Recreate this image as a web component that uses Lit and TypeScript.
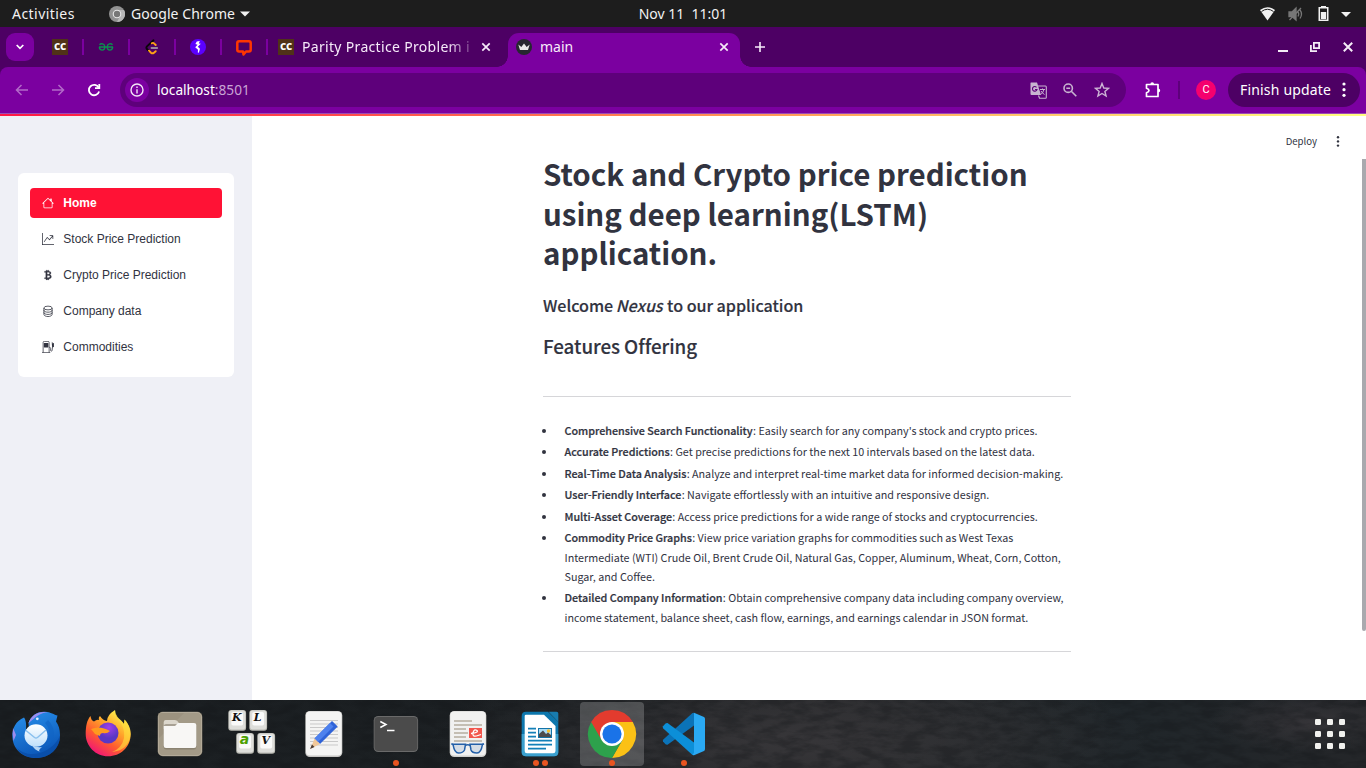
import { LitElement, html, css, svg } from "lit";
import { customElement } from "lit/decorators.js";
import { classMap } from "lit/directives/class-map.js";

const ccIcon = html`<span class="cc">cc</span>`;
const closeIcon = html`<svg width="10" height="10" viewBox="0 0 10 10" stroke="#f6eaf9" stroke-width="1.7" fill="none"><path d="M1.3 1.3 8.7 8.7M8.7 1.3 1.3 8.7" /></svg>`;

const pinned = [
  ccIcon,
  html`<svg width="16" height="16" viewBox="0 0 16 16" fill="none" stroke="#0b8f4e" stroke-width="1.4"><path d="M1.500 5.700C3 4 6.600 4.300 6.900 8M1 8H15M6.900 8C6.700 12 1.700 12.300 1.300 8M14.500 5.700C13 4 9.400 4.300 9.100 8M9.100 8C9.300 12 14.300 12.300 14.700 8"/></svg>`,
  html`<svg width="16" height="16" viewBox="0 0 16 16" fill="none" stroke-width="1.9" stroke-linecap="round"><path d="M9.500 1.300 3 7.400Q1.800 8.700 3 10L5 12" stroke="#0a0508"/><path d="M5 11.700 7 13.700Q8.500 15 10 13.700L11.700 12.200M7.800 4.200Q9.200 3.400 10.300 4.600L11.700 6" stroke="#ffa116"/><path d="M7.300 9H13.300" stroke="#b3b3b3" stroke-width="1.500"/></svg>`,
  html`<svg width="16" height="16" viewBox="0 0 16 16"><circle cx="8" cy="8" r="8" fill="#5b00ff"/><path d="M6.800 2.500 9.800 2 8.800 4.500 10.800 4.700 7.800 7.800 10 9.800 8.800 13.800 7.800 13.500 8 10.800 5.200 8.200 7.600 5.800 5.400 5Z" fill="#fff"/></svg>`,
  html`<svg width="18" height="18" viewBox="0 0 18 18" fill="none" stroke="#ff3600" stroke-width="2.500" stroke-linejoin="round"><path d="M4 2.300H14Q15.700 2.300 15.700 4V10.800Q15.700 12.500 14 12.500H11L8.500 15.500 8 12.500H4Q2.300 12.500 2.300 10.800V4Q2.300 2.300 4 2.300Z"/></svg>`,
];

const navItems = [
  {
    label: "Home",
    icon: svg`<path fill="currentColor" d="M2 13.500V7h1v6.500a.5.5 0 0 0 .5.5h9a.5.5 0 0 0 .5-.5V7h1v6.500a1.500 1.500 0 0 1-1.500 1.500h-9A1.500 1.500 0 0 1 2 13.500zM13 2.500V6l-2-2V2.500a.5.5 0 0 1 .5-.5h1a.5.5 0 0 1 .5.5zM7.293 1.500a1 1 0 0 1 1.414 0l6.647 6.646a.5.5 0 0 1-.708.708L8 2.207 1.354 8.854a.5.5 0 1 1-.708-.708L7.293 1.500z"/>`,
  },
  {
    label: "Stock Price Prediction",
    icon: svg`<path fill="currentColor" d="M0 0h1v15h15v1H0V0Zm10 3.500a.5.5 0 0 1 .5-.5h4a.5.5 0 0 1 .5.5v4a.5.5 0 0 1-1 0V4.900l-3.613 4.417a.5.5 0 0 1-.74.037L7.060 6.767l-3.656 5.027a.5.5 0 0 1-.808-.588l4-5.500a.5.5 0 0 1 .758-.06l2.609 2.610L13.445 4H10.500a.5.5 0 0 1-.5-.5Z"/>`,
  },
  {
    label: "Crypto Price Prediction",
    icon: svg`<path fill="currentColor" stroke="currentColor" stroke-width=".3" d="M5.500 13v1.250c0 .138.112.25.25.25h1a.25.25 0 0 0 .25-.25V13h.5v1.250c0 .138.112.25.25.25h1a.25.25 0 0 0 .25-.25V13h.084c1.992 0 3.416-1.033 3.416-2.820 0-1.502-1.007-2.323-2.186-2.440v-.088c.97-.242 1.683-.974 1.683-2.190C11.997 3.930 10.847 3 9.092 3H9V1.750a.25.25 0 0 0-.25-.25h-1a.25.25 0 0 0-.25.25V3h-.573V1.750a.25.25 0 0 0-.25-.25H5.750a.25.25 0 0 0-.25.25V3l-1.998.011a.25.25 0 0 0-.25.25v.989c0 .137.11.25.248.25l.755-.005a.75.75 0 0 1 .745.75v5.505a.75.75 0 0 1-.75.75l-.748.011a.25.25 0 0 0-.25.25v1c0 .138.112.25.25.25L5.500 13zm1.427-8.513h1.719c.906 0 1.438.498 1.438 1.312 0 .871-.575 1.362-1.877 1.362h-1.280V4.487zm0 4.051h1.840c1.137 0 1.756.58 1.756 1.524 0 .953-.626 1.450-2.158 1.450H6.927V8.539z"/>`,
  },
  {
    label: "Company data",
    icon: svg`<g fill="none" stroke="currentColor" stroke-width="1.050"><ellipse cx="8" cy="4" rx="5.500" ry="2.500"/><path d="M2.500 4v8.500C2.500 14 5 15.400 8 15.400s5.500-1.400 5.500-2.900V4M2.500 7C2.500 8.500 5 9.600 8 9.600S13.500 8.500 13.500 7M2.500 10C2.500 11.500 5 12.600 8 12.600S13.500 11.500 13.500 10"/></g>`,
  },
  {
    label: "Commodities",
    icon: svg`<path fill="currentColor" d="M3 2.500h5a.5.5 0 0 1 .5.5v5a.5.5 0 0 1-.5.5H3a.5.5 0 0 1-.5-.5V3a.5.5 0 0 1 .5-.5z"/><path fill="none" stroke="currentColor" d="M1.500 15.500V2A1.500 1.500 0 0 1 3 .5H8A1.500 1.500 0 0 1 9.500 2V15.500M0 15.500H11M9.500 8.500H10Q11.500 8.500 11.500 10V12.500Q11.500 13.500 12.500 13.500T13.500 12.500L14 8 15.500 7.500V3.500L13 2"/><path fill="currentColor" d="M13 3h2.700v5H13.500z"/>`,
  },
];

const features = [
  ["Comprehensive Search Functionality", ["Easily search for any company's stock and crypto prices."]],
  ["Accurate Predictions", ["Get precise predictions for the next 10 intervals based on the latest data."]],
  ["Real-Time Data Analysis", ["Analyze and interpret real-time market data for informed decision-making."]],
  ["User-Friendly Interface", ["Navigate effortlessly with an intuitive and responsive design."]],
  ["Multi-Asset Coverage", ["Access price predictions for a wide range of stocks and cryptocurrencies."]],
  ["Commodity Price Graphs", ["View price variation graphs for commodities such as West Texas", "Intermediate (WTI) Crude Oil, Brent Crude Oil, Natural Gas, Copper, Aluminum, Wheat, Corn, Cotton,", "Sugar, and Coffee."]],
  ["Detailed Company Information", ["Obtain comprehensive company data including company overview,", "income statement, balance sheet, cash flow, earnings, and earnings calendar in JSON format."]],
] as [string, string[]][];

const keycap = (x: number, y: number, letter: string, kind: string) => svg`
  <rect x=${x} y=${y} width="17.800" height="20.800" rx="3" fill="#b9b9b2"/>
  <rect x=${x + 0.8} y=${y + 0.6} width="16.200" height="18.800" rx="2.600" fill="#dededa"/>
  <rect x=${x + 3} y=${y + 2} width="11.800" height="13.500" rx="1.800" fill="#fafaf9"/>
  <text x=${x + 8.4} y=${y + 11} text-anchor="middle" class=${kind}>${letter}</text>`;

const apps = [
  {
    name: "Thunderbird", dots: 0,
    art: svg`<defs>
      <linearGradient id="tb" x1="0" y1="0" x2="0.400" y2="1"><stop offset="0" stop-color="#2a93ef"/><stop offset="1" stop-color="#0b57b8"/></linearGradient>
      <linearGradient id="tbe" x1="0" y1="0" x2="0" y2="1"><stop offset="0" stop-color="#fff"/><stop offset="1" stop-color="#bfe0fb"/></linearGradient></defs>
      <path d="M20 15.500C12 19 8 26 8.300 35C9.500 49 20 56 32 56C46 56 56 46 56 33C56 27 54.500 23 52 19.500L53.500 13.500C50 13 47 10 41 9.800C33 9.300 27 14 24.500 21L24.800 24.500L22 28C22.500 23 22 18 20 15.500Z" fill="url(#tb)"/>
      <path d="M9 26Q8 32 9.500 39L12 33Q10 28 9 26ZM24.300 21.500C27 13 34 8.800 44 10.300C36 10.500 32 15 24.300 21.500Z" fill="#9d8df0"/>
      <path d="M12 45C22 57 46 54 56 34C56 47 45 56 32 56Q18 56 12 45Z" fill="#0a4ca5" opacity=".75"/>
      <path d="M41 21Q47 27 45 37Q42 44 35 46Q48 45 50 33Q50 24 44 18Z" fill="#1164c4" opacity=".6"/>
      <circle cx="33.300" cy="16.800" r="1.400" fill="#dff0ff"/>
      <ellipse cx="32" cy="33.500" rx="11.500" ry="11.300" fill="url(#tbe)"/><path d="M28 43Q33 46 38 45Q33 49 36.500 50Q30 48 28 43Z" fill="#b5d6f5"/>
      <path d="M22 28.500 30.500 35.500Q32 36.500 33.500 35.500L42 28" stroke="#8ac0ee" stroke-width="1.500" fill="none"/>`,
  },
  {
    name: "Firefox", dots: 0,
    art: svg`<defs>
      <linearGradient id="ff" x1="0.850" y1="0.100" x2="0.250" y2="1"><stop offset="0" stop-color="#fff44f"/><stop offset=".35" stop-color="#ffa52a"/><stop offset=".65" stop-color="#ff5a30"/><stop offset="1" stop-color="#f0107c"/></linearGradient>
      <radialGradient id="fp" cx=".55" cy=".25"><stop offset="0" stop-color="#a13fe8"/><stop offset="1" stop-color="#5a37c4"/></radialGradient></defs>
      <path d="M14.500 14C15 17 16 19 18 19.500Q21 17 23 18C22.500 15.500 23 15 24 14C26 17 28 18.500 31 19Q31 13 39 8C39 16 45 17 48 22L48.500 17.500C54 23 54.700 29 54.700 32C54.700 45 44.500 54.300 32 54.300S9.700 44 9.700 32C9.700 24 11 18 14.500 14Z" fill="url(#ff)"/>
      <circle cx="32" cy="31" r="10.500" fill="url(#fp)"/>
      <path d="M15 27Q24 23 34 29Q31 32 27 31Q24 31 24 34L19 32Q17 29 15 27Z" fill="#ff9a1f"/>
      <path d="M39 8C38 18 50 20 48 36Q46 46 36 50Q53 48 54.600 32Q54 24 48.500 17.500L48 22C45 17 40 16 39 8Z" fill="#ffe13d" opacity=".6"/>`,
  },
  {
    name: "Files", dots: 0,
    art: svg`<rect x="9.700" y="9.700" width="44.600" height="44.600" rx="5" fill="#8c826f"/><rect x="10.500" y="10.500" width="43" height="43" rx="4.500" fill="#a39a87" stroke="#b3aa99"/>
      <path d="M10.500 11H36L11 36Z" fill="#978d79" opacity=".6"/>
      <path d="M17.500 18H27Q29.500 18 30.500 20.500L31 23L30 27H15.700V20Q16 18 17.500 18Z" fill="#dcd7cc"/>
      <rect x="15.700" y="22" width="32.500" height="25.500" rx="2.500" fill="#746b5b" opacity=".5"/><path d="M15.700 24H27L30 21H46Q48.300 21 48.300 23V43.500Q48.300 46 46 46H18Q15.700 46 15.700 43.500Z" fill="#f8f7f5"/>`,
  },
  {
    name: "Klavaro", dots: 0,
    art: svg`${keycap(8.3, 8, "K", "key")}${keycap(29.3, 8, "L", "key")}${keycap(16.2, 31, "a", "key green")}${keycap(37.3, 31, "V", "key")}`,
  },
  {
    name: "Text Editor", dots: 0,
    art: svg`<rect x="13.300" y="9" width="37" height="46" rx="4.500" fill="#c7c6c4"/><rect x="14" y="9.600" width="35.600" height="44" rx="4" fill="#f4f4f3"/>
      <path d="M18 18.500H46M18 22H46M18 25.500H46M18 29H46M18 32.500H46M18 36H46M18 39.500H46M18 43H46" stroke="#c9c9c9"/>
      <path d="M40 19 45.700 24.500 28 42 22.500 36.500Z" fill="#2f63d8"/><path d="M38 21 41.500 24.500 25 41 22.500 36.500Z" fill="#4d81ee"/>
      <path d="M22.500 36.500 28 42 18.500 46.700Z" fill="#f1c899"/><path d="M20 42.500 22.500 45 18 47Z" fill="#4b3a31"/>`,
  },
  {
    name: "Terminal", dots: 1,
    art: svg`<rect x="9.700" y="14" width="44.400" height="36" rx="4.500" fill="#6a6a6a"/><rect x="10.500" y="15" width="42.800" height="34" rx="4" fill="#4b4b4b"/>
      <path d="M16.300 19.500 22 22.500 16.300 25.500M23 28.500H30.500" fill="none" stroke="#fff" stroke-width="1.500"/>`,
  },
  {
    name: "Document Viewer", dots: 0,
    art: svg`<rect x="13.700" y="9" width="36.600" height="46" rx="4.500" fill="#cfcfcd"/><rect x="14.300" y="9.600" width="35.400" height="44" rx="4" fill="#f1f1f0"/>
      <path d="M18 19H36M18 23H46M18 27H30M18 31H32M18 35H30M18 39H46" stroke="#b5ad9f" stroke-width="1.700"/>
      <rect x="33" y="26" width="13" height="10" fill="#f2564d"/><path d="M35 31.500Q43 30.500 41 28.500Q38 26.500 37 31T42 33.500L45 32.500" fill="none" stroke="#fff" stroke-width="1.300"/>
      <g fill="#d5dde6" stroke="#2460a9" stroke-width="1.500"><path d="M17 42.300H29.500L28.500 48Q27 51 22.500 51Q18.500 51 17 42.300ZM34 42.300H46.500Q45 51 41 51Q36 51 35 48Z"/><path d="M29 43.500Q31.700 41.800 34.500 43.500M17 42.500 15.300 41.800M46.500 42.500 48 41.800" fill="none"/></g>`,
  },
  {
    name: "LibreOffice Writer", dots: 2,
    art: svg`<path d="M18 9.700H40L50.300 20V50Q50.300 54.300 46 54.300H18Q13.700 54.300 13.700 50V14Q13.700 9.700 18 9.700Z" fill="#0d77ad"/><path d="M13.700 32H50.300V50Q50.300 54.300 46 54.300H18Q13.700 54.300 13.700 50Z" fill="#3ba0ce"/>
      <path d="M18 12.700H36L47.500 24V49Q47.500 51.300 45 51.300H19Q16.700 51.300 16.700 49V14Q16.700 12.700 18 12.700Z" fill="#fff"/>
      <path d="M40.500 9.700H48.500Q50.300 9.700 50.300 11.500V20Z" fill="#187caf"/>
      <path d="M20 26.700H28M20 30.700H28M20 34.700H28M20 38.700H44M20 42.700H44M20 46.700H38" stroke="#1380b8" stroke-width="1.800"/>
      <rect x="30" y="26" width="14" height="10" fill="#1473a6"/><rect x="31" y="27" width="12" height="8" fill="#a9dcf7"/><circle cx="40.500" cy="29" r="1.700" fill="#f8bf28"/><path d="M31 35V32L35 28.500 38 32 40 30.500 43 33V35Z" fill="#4c4c4c"/>`,
  },
  {
    name: "Google Chrome", dots: 1,
    art: svg`<path d="M32 32 11.200 20A24 24 0 0 1 52.800 20Z" fill="#e33b2e"/><path d="M32 32 32 56A24 24 0 0 1 11.200 20Z" fill="#2da14c"/>
      <path d="M32 20H52.800A24 24 0 0 1 32 56L42.400 38Z" fill="#fbc116"/><path d="M11.200 20 21.600 38 32 32V20Z" fill="#e33b2e"/><path d="M21.600 38 32 44 42.400 38 32 56Q27 55 25 51Z" fill="#2da14c"/>
      <circle cx="32" cy="32" r="12" fill="#fff"/><circle cx="32" cy="32" r="9.600" fill="#1a73e8"/>`,
  },
  {
    name: "Visual Studio Code", dots: 1,
    art: svg`<path d="M42 10.700V23.500L15.500 42.700Q14.500 43 13.500 42.300L11 39.500Q10.500 38.300 11.300 37.400L40.500 11Z" fill="#0b73b8"/>
      <path d="M42 53.300V40.500L15.500 21Q14.500 20.800 13.500 21.500L11 24.200Q10.500 25.500 11.300 26.500L40.500 53Z" fill="#0c8fd8"/>
      <path d="M42 10.700 52 15Q53 15.500 53 17V47Q53 48.500 52 49L42 53.300Q41 53.300 40.500 52.500L42 51Z" fill="#2aa9f3"/>`,
  },
];

@customElement("app-root")
export class AppRoot extends LitElement {
  static styles = css`
    :host { display: flex; flex-direction: column; width: 1366px; height: 768px; overflow: hidden; font-family: "Noto Sans", "Open Sans", sans-serif; }
    * { box-sizing: border-box; }
    svg { display: block; flex: none; }
    .system { height: 27px; flex: none; background: #1d1d1d; color: #f2f2f2; display: grid; grid-template-columns: 1fr auto 1fr; align-items: center; font-size: 14px; line-height: 27px; padding: 0 13px 0 12px; }
    .sysleft { display: flex; align-items: center; }
    .activities { width: 97px; letter-spacing: 0.450px; }
    .appname { margin: 0 5px 0 6px; letter-spacing: 0.050px; }
    .clock { white-space: pre; margin-left: 1px; }
    .sysright { display: flex; justify-content: flex-end; align-items: center; }
    .tabs { height: 40px; flex: none; background: #4d0064; display: flex; padding-left: 6px; align-items: center; color: #f6eaf9; font-size: 14px; }
    .search { width: 28px; height: 28px; border-radius: 9px; background: #7b00a0; display: grid; place-items: center; margin-right: 4px; }
    .pin { width: 46px; height: 16px; border-right: 2px solid #7b00a0; display: grid; place-items: center; }
    .cc { display: block; width: 16px; height: 16px; background: #503218; color: #fff; font: bold 12px/14px "Noto Sans", sans-serif; text-align: center; letter-spacing: -0.200px; }
    .tab { display: flex; align-items: center; height: 34px; align-self: flex-end; }
    .idle { width: 240px; padding: 0 17px 6px 10px; }
    .title { flex: 1; white-space: nowrap; margin-left: 8px; line-height: 20px; }
    .idle .title { flex: none; width: 169px; margin-right: 10px; letter-spacing: 0.320px; -webkit-mask-image: linear-gradient(90deg, #000 86%, rgba(0, 0, 0, 0.250) 100%); mask-image: linear-gradient(90deg, #000 86%, rgba(0, 0, 0, 0.250) 100%); }
    .active { position: relative; width: 232px; background: #7b00a0; border-radius: 11px 11px 0 0; padding: 0 11px 6px 8px; }
    .active::before, .active::after { content: ""; position: absolute; bottom: 0; width: 11px; height: 11px; }
    .active::before { left: -11px; background: radial-gradient(circle at 0 0, transparent 10.500px, #7b00a0 11px); }
    .active::after { right: -11px; background: radial-gradient(circle at 100% 0, transparent 10.500px, #7b00a0 11px); }
    .plus { margin-left: 15px; }
    .wincontrols { margin-left: auto; display: flex; gap: 22px; padding-right: 13px; align-items: center; }
    .wincontrols svg:last-child { margin-left: 1px; }
    .toolbarwrap { background: #4d0064; flex: none; }
    .toolbar { height: 46px; background: #7b00a0; border-radius: 8px 8px 0 0; display: flex; align-items: center; padding: 0 6px 0 4px; }
    .btn { width: 36px; display: grid; place-items: center; }
    .omni { margin-left: 8px; width: 1006px; height: 34px; border-radius: 17px; background: #5e007b; display: flex; align-items: center; padding: 0 8px 0 5px; }
    .info { width: 24px; height: 24px; border-radius: 12px; background: #7b00a0; display: grid; place-items: center; }
    .url { flex: 1; margin-left: 8px; padding-bottom: 2px; color: #fff; font-size: 13.700px; }
    .url span { color: #c9a4d5; }
    .oicon { width: 32px; display: grid; place-items: center; }
    .ext { width: 54px; height: 18px; padding-left: 2px; border-right: 2px solid #5e007b; display: grid; place-items: center; }
    .avatar { width: 20px; height: 20px; margin: 0 12px 0 16px; border-radius: 10px; background: #f5006e; color: #fff; font: 11px/20px Roboto, sans-serif; text-align: center; }
    .update { width: 132px; height: 34px; border-radius: 17px; background: #4d0064; color: #fff; display: flex; align-items: center; justify-content: space-between; padding: 0 14px 2px 12px; font-size: 14px; letter-spacing: 0.180px; }
    .edge { flex: none; height: 1px; background: #9b4ab8; }
    .decor { flex: none; height: 2px; background: linear-gradient(90deg, #ff1744, #ff4b4b 25%, #ff8a50 50%, #fffd80 98%); }
    .page { flex: 1; min-height: 0; background: #fff; display: flex; color: #31333f; }
    .sidebar { width: 252px; background: #eff0f6; padding: 57px 18px 0; }
    .menu { background: #fff; border-radius: 6px; height: 204px; padding: 15px 12px; display: flex; flex-direction: column; gap: 6px; }
    .nav { height: 30px; border-radius: 4px; display: flex; align-items: center; padding-left: 12px; gap: 9.300px; font: 12px/18px "Liberation Sans", Arial, sans-serif; color: #31333f; }
    .nav.on { background: #ff1235; color: #fff; font-weight: bold; }
    .main { flex: 1; display: flex; font-family: "Noto Sans CJK SC", "Open Sans", sans-serif; }
    .doc { width: 528px; margin-left: 291px; padding-top: 38px; }
    h1 { margin: 0; font-size: 29.500px; line-height: 39.600px; font-weight: 700; white-space: nowrap; }
    .welcome { font-size: 16.100px; line-height: 22px; margin-top: 21px; font-weight: 500; letter-spacing: -0.030px; white-space: nowrap; -webkit-text-stroke: 0.150px #31333f; }
    .welcome em { margin: 0 1px 0 -1px; }
    .offer { font-size: 18.800px; line-height: 26px; margin-top: 17px; font-weight: 500; letter-spacing: -0.050px; -webkit-text-stroke: 0.150px #31333f; }
    .rule { height: 1px; background: #d6d6d9; }
    .first { margin-top: 37px; }
    ul { list-style: none; margin: 24px 0 22px; padding: 0; font-size: 10.750px; line-height: 19.300px; }
    li { display: flex; padding-bottom: 2.200px; }
    li::before { content: ""; width: 4px; height: 4px; border-radius: 2px; background: #31333f; margin: 8px 18.500px 0 -1px; flex: none; }
    .line { white-space: nowrap; }
    b { font-weight: 500; letter-spacing: -0.005px; margin-right: 0.300px; -webkit-text-stroke: 0.220px #31333f; }
    .actions { margin-left: auto; padding: 15px 9.500px 0 0; display: flex; align-items: center; height: 34px; font-size: 9.600px; gap: 17.500px; }
    .track { width: 4px; padding-top: 43px; }
    .thumb { height: 472px; background: #a9a9ae; border-radius: 0 0 2px 2px; }
    .dock { height: 68px; flex: none; display: flex; gap: 8px; padding: 2px 18px 0 4px; background: radial-gradient(ellipse 100px 30px at 1310px 22px, #353438, transparent), radial-gradient(ellipse 360px 80px at 790px 40px, #373639, transparent), linear-gradient(90deg, #1b1f22, #1c2023 45%, #28292b 60%, #20262a 82%, #242629); position: relative; }
    .grain { position: absolute; inset: 0; opacity: 0.300; }
    .app { width: 64px; height: 64px; border-radius: 4px; position: relative; }
    .app.focus { background: rgba(255, 255, 255, 0.200); }
    .dots { position: absolute; left: 0; right: 0; bottom: 0; display: flex; gap: 3px; justify-content: center; }
    .dots i { width: 6px; height: 6px; border-radius: 3px; background: #e95420; }
    .key { font: italic bold 11px "DejaVu Serif", serif; fill: #111; }
    .green { font: italic bold 14px "DejaVu Sans", sans-serif; fill: #4da000; }
    .grid { position: relative; margin: 17px 3px 0 auto; display: grid; grid-template-columns: repeat(3, 6px); grid-auto-rows: 6px; gap: 6px; height: 30px; }
    .grid i { background: #f1f1ee; border-radius: 1.200px; }
  `;

  private systemBar() {
    return html`<div class="system">
      <div class="sysleft"><span class="activities">Activities</span>
        <svg width="16" height="16" viewBox="0 0 16 16"><circle cx="8" cy="8" r="8" fill="#929292"/><path d="M8 4H15A8 8 0 0 1 8 16L11 10Z" fill="#b8b8b8"/><circle cx="8" cy="8" r="4.300" fill="#e8e8e8"/><circle cx="8" cy="8" r="3.200" fill="#777"/></svg>
        <span class="appname">Google Chrome</span>
        <svg width="10" height="6"><path d="M0 .5H10L5 5.500Z" fill="#f2f2f2"/></svg></div>
      <span class="clock">Nov 11  11:01</span>
      <div class="sysright">
        <svg width="93" height="18" viewBox="0 0 93 18"><path d="M0 5Q7.500-.5 15 5L7.500 15.500Z" fill="#f2f2f2"/><path d="M1.500 6.500Q7.500 2 13.500 6.500" fill="none" stroke="#1d1d1d"/>
          <g stroke="#777" fill="none" stroke-width="1.300"><path d="M29 7H32L36 3V15L32 11.500H29Z" fill="#777"/><path d="M38 7Q39.500 9 38 11.500M40 5Q43 9 40 13.500M29.500 15 41 3"/></g>
          <path d="M61 2V1H66V2H68.500V16H58.500V2Z" fill="#f2f2f2"/><path d="M60 3.500H67V14.500H60Z" fill="#1d1d1d"/><path d="M60.800 7H66.200V14H60.800Z" fill="#f2f2f2"/>
          <path d="M81 7H91L86 12Z" fill="#f2f2f2"/></svg></div>
    </div>`;
  }

  private tabStrip() {
    return html`<div class="tabs">
      <div class="search"><svg width="8" height="6" viewBox="0 0 8 6"><path d="M.7 1 4 4.300 7.300 1" fill="none" stroke="#fff" stroke-width="1.700"/></svg></div>
      ${pinned.map((p) => html`<div class="pin">${p}</div>`)}
      <div class="tab idle">${ccIcon}<span class="title">Parity Practice Problem i</span>${closeIcon}</div>
      <div class="tab active"><svg width="16" height="16" viewBox="0 0 16 16"><circle cx="8" cy="8" r="8" fill="#262730"/><path d="M2.300 5.500 5.300 8 8 4.500 10.700 8 13.700 5.500 12 11H4Z" fill="#e9e9e9"/></svg><span class="title">main</span>${closeIcon}</div>
      <svg class="plus" width="10" height="10"><path d="M5 0V10M0 5H10" stroke="#f6eaf9" stroke-width="1.600"/></svg>
      <div class="wincontrols">
        <svg width="10" height="10"><path d="M0 9H10" stroke="#f4ecf6" stroke-width="2"/></svg>
        <svg width="10" height="10" fill="none" stroke="#f4ecf6" stroke-width="1.800"><path d="M3.900 .9H9.100V6.100H3.900ZM.9 3V9.100H7"/></svg>
        <svg width="10" height="10"><path d="M.8 .8 9.200 9.200M9.200 .8 .8 9.200" stroke="#f4ecf6" stroke-width="2"/></svg>
      </div></div>`;
  }

  private toolbar() {
    return html`<div class="toolbarwrap"><div class="toolbar">
      <div class="btn"><svg width="14" height="12" fill="none" stroke="#b26ac8" stroke-width="1.500"><path d="M13 6H1.500M6.500 1 1.500 6 6.500 11"/></svg></div>
      <div class="btn"><svg width="14" height="12" fill="none" stroke="#b26ac8" stroke-width="1.500"><path d="M1 6H12.500M7.500 1 12.500 6 7.500 11"/></svg></div>
      <div class="btn"><svg width="14" height="14" fill="none" stroke="#fff" stroke-width="1.800"><path d="M11.700 4.600A5.200 5.200 0 1 0 12.100 8.500"/><path d="M12.300 1V5.200H8" /></svg></div>
      <div class="omni"><div class="info"><svg width="14" height="14" fill="none" stroke="#f3e5f7" stroke-width="1.400"><circle cx="7" cy="7" r="6"/><path d="M7 6.300V10.500M7 3.600V5.100"/></svg></div>
        <div class="url">localhost<span>:8501</span></div>
        <div class="oicon"><svg width="17" height="17" viewBox="0 0 17 17"><path d="M1 .5H7L11 13H1.500Q.5 13 .5 12V1.500Q.5.500 1 .5Z" fill="#c8b3d0"/><path d="M8 4H15.500Q16.300 4 16.300 5V15.500Q16.300 16.300 15.500 16.300H9.500L8.500 13.500" fill="none" stroke="#c8b3d0" stroke-width="1.100"/><path d="M6.500 5.300A2.300 2.300 0 1 0 7 7.500H5" stroke="#5e007b" fill="none" stroke-width="1.100"/><path d="M10 7.500H15M12.500 6.500V7.500M14 7.500Q13 11 10.800 12.500M11 9Q12 11 14.500 12.500" stroke="#c8b3d0" fill="none"/></svg></div>
        <div class="oicon"><svg width="14" height="14" fill="none" stroke="#c8b3d0" stroke-width="1.600"><circle cx="5.200" cy="5.200" r="4.200"/><path d="M8.300 8.300 13.300 13.300M3.300 5.200H7.100"/></svg></div>
        <div class="oicon"><svg width="16" height="16" fill="none" stroke="#cdb5d5" stroke-width="1.400"><path d="M8 1.500 9.800 6 14.600 6.300 10.900 9.400 12.100 14 8 11.500 3.900 14 5.100 9.400 1.400 6.300 6.200 6Z"/></svg></div>
      </div>
      <div class="ext"><svg width="18" height="18" viewBox="0 0 18 18"><path d="M2.500 3.500H14V15.500H2.500V11.800Q5 11 5 9.500T2.500 7.200Z" fill="none" stroke="#fff" stroke-width="1.700" stroke-linejoin="round"/><path d="M6.300 3.500Q6.300 1.300 8.200 1.300T10.100 3.500ZM14 7.600Q16.200 7.600 16.200 9.500T14 11.400Z" fill="#fff"/></svg></div>
      <div class="avatar">C</div>
      <div class="update"><span>Finish update</span><svg width="4" height="16" fill="#fff"><circle cx="2" cy="3" r="1.600"/><circle cx="2" cy="8.700" r="1.600"/><circle cx="2" cy="14.300" r="1.600"/></svg></div>
    </div></div>`;
  }

  render() {
    return html`${this.systemBar()}${this.tabStrip()}${this.toolbar()}
      <div class="edge"></div><div class="decor"></div>
      <div class="page">
        <aside class="sidebar"><nav class="menu">
          ${navItems.map((n, i) => html`<div class=${classMap({ nav: true, on: i === 0 })}><svg width="12" height="12" viewBox="0 0 16 16">${n.icon}</svg><span>${n.label}</span></div>`)}
        </nav></aside>
        <main class="main">
          <article class="doc">
            <h1>Stock and Crypto price prediction<br />using deep learning(LSTM)<br />application.</h1>
            <div class="welcome">Welcome <em>Nexus</em> to our application</div>
            <div class="offer">Features Offering</div>
            <div class="rule first"></div>
            <ul>${features.map(([head, lines]) => html`<li><div class="line"><b>${head}</b>: ${lines.map((l, i) => (i ? html`<br />${l}` : l))}</div></li>`)}</ul>
            <div class="rule"></div>
          </article>
          <div class="actions"><span>Deploy</span><svg width="18" height="12" fill="#31333f"><circle cx="3" cy="2.200" r="1.200"/><circle cx="3" cy="6.400" r="1.200"/><circle cx="3" cy="10.600" r="1.200"/></svg></div>
          <div class="track"><div class="thumb"></div></div>
        </main>
      </div>
      <footer class="dock">
        <svg class="grain" width="1366" height="68"><filter id="n" color-interpolation-filters="sRGB"><feTurbulence type="fractalNoise" baseFrequency=".05 .13" numOctaves="4" seed="7"/><feColorMatrix values="0 0 0 0 .07  0 0 0 0 .08  0 0 0 0 .09  3 0 0 0 -1.100"/></filter><rect width="1366" height="68" filter="url(#n)"/></svg>
        ${apps.map((a) => html`<div class=${classMap({ app: true, focus: a.name === "Google Chrome" })}><svg width="64" height="64" viewBox="0 0 64 64">${a.art}</svg><div class="dots">${Array.from({ length: a.dots }, () => html`<i></i>`)}</div></div>`)}
        <div class="grid">${Array.from({ length: 9 }, () => html`<i></i>`)}</div>
      </footer>`;
  }
}
